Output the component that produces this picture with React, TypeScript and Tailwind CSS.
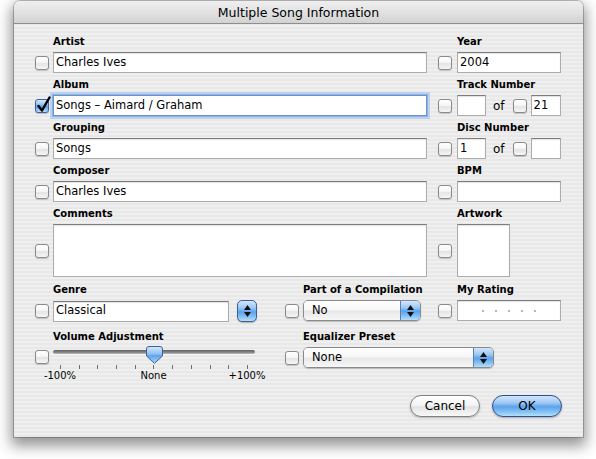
import React from 'react';

const BLUE =
  "bg-[linear-gradient(to_bottom,#d2e6fb_0%,#9cc8f4_35%,#6aa9ec_50%,#5ea4ec_55%,#86c3f5_80%,#b4e0fc_100%)]";

function Check({ checked = false, cls = '' }: { checked?: boolean; cls?: string }) {
  if (checked) {
    return (
      <div
        className={`relative w-[14px] h-[14px] shrink-0 rounded-[3px] border border-[#3d5f9c] ${BLUE} shadow-[0_1px_1px_rgba(0,0,0,0.2)] ${cls}`}
      >
        <svg className="absolute left-[0px] top-[-4px]" width="16" height="17" viewBox="0 0 16 17">
          <path
            d="M2.5 10 L6 14.5 L13.5 1.5"
            fill="none"
            stroke="#000"
            strokeWidth="2.4"
            strokeLinecap="round"
            strokeLinejoin="round"
          />
        </svg>
      </div>
    );
  }
  return (
    <div
      className={`w-[14px] h-[14px] shrink-0 rounded-[3px] border border-[#8a8a8a] bg-[linear-gradient(to_bottom,#ffffff_0%,#f6f6f6_45%,#e4e4e4_55%,#f6f6f6_100%)] shadow-[0_1px_1px_rgba(0,0,0,0.18)] ${cls}`}
    />
  );
}

function Field({
  children,
  cls,
  focused = false,
}: {
  children?: React.ReactNode;
  cls: string;
  focused?: boolean;
}) {
  const border = focused
    ? 'border border-[#6b92cc] shadow-[0_0_0_1px_#8fb2e3,0_0_0_3px_#bcd2f1]'
    : 'border border-[#acacac] border-t-[#7e7e7e] shadow-[inset_0_1px_1px_rgba(0,0,0,0.12)]';
  return (
    <div className={`bg-white ${border} flex items-center pl-[2px] text-[11.5px] text-black shrink-0 ${cls}`}>
      {children}
    </div>
  );
}

function Arrows() {
  return (
    <div className="flex flex-col items-center gap-[2px]">
      <svg width="7" height="5" viewBox="0 0 7 5">
        <path d="M3.5 0 L7 5 L0 5 Z" fill="#111" />
      </svg>
      <svg width="7" height="5" viewBox="0 0 7 5">
        <path d="M0 0 L7 0 L3.5 5 Z" fill="#111" />
      </svg>
    </div>
  );
}

function Popup({ text, cls }: { text: string; cls: string }) {
  return (
    <div
      className={`h-[21px] flex rounded-[5px] border border-[#8a8a8a] overflow-hidden shadow-[0_1px_1px_rgba(0,0,0,0.2)] shrink-0 ${cls}`}
    >
      <div className="flex-1 flex items-center pl-[8px] text-[11.5px] text-black bg-[linear-gradient(to_bottom,#ffffff_0%,#f7f7f7_45%,#e8e8e8_55%,#f7f7f7_100%)]">
        {text}
      </div>
      <div className={`w-[20px] border-l border-[#5c7fb8] flex items-center justify-center ${BLUE}`}>
        <Arrows />
      </div>
    </div>
  );
}

function Label({ children, cls = 'pl-[18px]' }: { children: React.ReactNode; cls?: string }) {
  return (
    <div className={`h-[14px] leading-[14px] text-[10px] font-bold text-black mb-[3px] whitespace-nowrap ${cls}`}>
      {children}
    </div>
  );
}

function Slider() {
  const ticks = Array.from({ length: 11 });
  return (
    <div className="relative w-[202px] h-[36px] shrink-0">
      <div className="absolute left-0 right-0 top-[3px] h-[4px] rounded-full bg-[linear-gradient(to_bottom,#5e5e5e,#8a8a8a_60%,#b9b9b9)] shadow-[0_1px_0_rgba(255,255,255,0.6)]" />
      <svg className="absolute left-[93px] top-[-1px]" width="17" height="18" viewBox="0 0 17 18">
        <defs>
          <linearGradient id="thumb" x1="0" y1="0" x2="0" y2="1">
            <stop offset="0" stopColor="#d6e9fc" />
            <stop offset="0.45" stopColor="#8fc0f3" />
            <stop offset="0.55" stopColor="#5fa3ec" />
            <stop offset="1" stopColor="#a8dbfb" />
          </linearGradient>
        </defs>
        <path
          d="M3 0.5 H14 Q16.5 0.5 16.5 3 V10 L8.5 17.3 L0.5 10 V3 Q0.5 0.5 3 0.5 Z"
          fill="url(#thumb)"
          stroke="#3f5f98"
          strokeWidth="1"
        />
      </svg>
      <div className="absolute left-[7px] right-[7px] top-[18px] flex justify-between">
        {ticks.map((_, i) => (
          <div key={i} className="w-[1px] h-[4px] bg-[#6f6f6f]" />
        ))}
      </div>
      <div className="absolute left-[-13px] right-[-12px] top-[23px] flex justify-between text-[10px] leading-[12px] text-black">
        <span className="w-[40px] text-center">-100%</span>
        <span className="w-[40px] text-center">None</span>
        <span className="w-[40px] text-center">+100%</span>
      </div>
    </div>
  );
}

export default function App() {
  return (
    <div className="w-[596px] h-[459px] bg-white pl-[14px] pt-[1px] font-['DejaVu_Sans',sans-serif]">
      <div className="w-[569px] h-[436px] flex flex-col rounded-t-[6px] overflow-hidden bg-[repeating-linear-gradient(to_bottom,#efefef_0px,#efefef_2px,#e8e8e8_2px,#e8e8e8_4px)] shadow-[0_0_0_1px_rgba(0,0,0,0.22),0_6px_14px_3px_rgba(0,0,0,0.42)]">
        {/* Title bar */}
        <div className="h-[23px] shrink-0 flex items-center justify-center pt-[2px] border-b border-[#8e8e8e] bg-[linear-gradient(to_bottom,#efefef_0%,#e2e2e2_50%,#d2d2d2_100%)] text-[12.5px] text-black">
          Multiple Song Information
        </div>

        {/* Content */}
        <div className="flex-1 flex flex-col pl-[21px] pr-[21px] pt-[11px] pb-[20px]">
          {/* Row 1 */}
          <div className="flex mb-[5px]">
            <div className="w-[392px] flex flex-col">
              <Label>Artist</Label>
              <div className="flex items-center gap-[4px]">
                <Check />
                <Field cls="w-[374px] h-[21px]">Charles Ives</Field>
              </div>
            </div>
            <div className="ml-[11px] w-[123px] flex flex-col">
              <Label cls="pl-[19px]">Year</Label>
              <div className="flex items-center gap-[5px]">
                <Check />
                <Field cls="w-[104px] h-[21px]">2004</Field>
              </div>
            </div>
          </div>

          {/* Row 2 */}
          <div className="flex mb-[5px]">
            <div className="w-[392px] flex flex-col">
              <Label>Album</Label>
              <div className="flex items-center gap-[4px]">
                <Check checked />
                <Field cls="w-[374px] h-[21px]" focused>
                  Songs – Aimard / Graham
                </Field>
              </div>
            </div>
            <div className="ml-[11px] w-[123px] flex flex-col">
              <Label cls="pl-[19px]">Track Number</Label>
              <div className="flex items-center">
                <Check />
                <Field cls="ml-[5px] w-[29px] h-[21px]" />
                <span className="ml-[7px] text-[12px] text-black">of</span>
                <Check cls="ml-[8px]" />
                <Field cls="ml-[4px] w-[30px] h-[21px]">21</Field>
              </div>
            </div>
          </div>

          {/* Row 3 */}
          <div className="flex mb-[5px]">
            <div className="w-[392px] flex flex-col">
              <Label>Grouping</Label>
              <div className="flex items-center gap-[4px]">
                <Check />
                <Field cls="w-[374px] h-[21px]">Songs</Field>
              </div>
            </div>
            <div className="ml-[11px] w-[123px] flex flex-col">
              <Label cls="pl-[19px]">Disc Number</Label>
              <div className="flex items-center">
                <Check />
                <Field cls="ml-[5px] w-[29px] h-[21px]">1</Field>
                <span className="ml-[7px] text-[12px] text-black">of</span>
                <Check cls="ml-[8px]" />
                <Field cls="ml-[4px] w-[30px] h-[21px]" />
              </div>
            </div>
          </div>

          {/* Row 4 */}
          <div className="flex mb-[5px]">
            <div className="w-[392px] flex flex-col">
              <Label>Composer</Label>
              <div className="flex items-center gap-[4px]">
                <Check />
                <Field cls="w-[374px] h-[21px]">Charles Ives</Field>
              </div>
            </div>
            <div className="ml-[11px] w-[123px] flex flex-col">
              <Label cls="pl-[19px]">BPM</Label>
              <div className="flex items-center gap-[5px]">
                <Check />
                <Field cls="w-[104px] h-[21px]" />
              </div>
            </div>
          </div>

          {/* Row 5 */}
          <div className="flex mb-[6px]">
            <div className="w-[392px] flex flex-col">
              <Label>Comments</Label>
              <div className="flex items-center gap-[4px]">
                <Check />
                <Field cls="w-[374px] h-[53px]" />
              </div>
            </div>
            <div className="ml-[11px] w-[123px] flex flex-col">
              <Label cls="pl-[19px]">Artwork</Label>
              <div className="flex items-center gap-[5px]">
                <Check />
                <Field cls="w-[53px] h-[53px]" />
              </div>
            </div>
          </div>

          {/* Row 6 */}
          <div className="flex mb-[8px]">
            <div className="w-[250px] flex flex-col">
              <Label>Genre</Label>
              <div className="flex items-center">
                <Check />
                <Field cls="ml-[4px] w-[176px] h-[21px]">Classical</Field>
                <div
                  className={`ml-[8px] w-[20px] h-[22px] rounded-[5px] border border-[#3f5f98] flex items-center justify-center shadow-[0_1px_1px_rgba(0,0,0,0.25)] ${BLUE}`}
                >
                  <Arrows />
                </div>
              </div>
            </div>
            <div className="w-[153px] flex flex-col">
              <Label>Part of a Compilation</Label>
              <div className="flex items-center">
                <Check />
                <Popup text="No" cls="ml-[4px] w-[118px]" />
              </div>
            </div>
            <div className="w-[123px] flex flex-col">
              <Label cls="pl-[19px]">My Rating</Label>
              <div className="flex items-center gap-[5px]">
                <Check />
                <Field cls="w-[104px] h-[21px] pl-[24px] gap-[11px]">
                  <span className="w-[2px] h-[2px] bg-[#b5b5b5]" />
                  <span className="w-[2px] h-[2px] bg-[#b5b5b5]" />
                  <span className="w-[2px] h-[2px] bg-[#b5b5b5]" />
                  <span className="w-[2px] h-[2px] bg-[#b5b5b5]" />
                  <span className="w-[2px] h-[2px] bg-[#b5b5b5]" />
                </Field>
              </div>
            </div>
          </div>

          {/* Row 7 */}
          <div className="flex">
            <div className="w-[250px] flex flex-col">
              <Label>Volume Adjustment</Label>
              <div className="flex items-start">
                <Check cls="mt-[3px]" />
                <div className="ml-[4px]">
                  <Slider />
                </div>
              </div>
            </div>
            <div className="w-[210px] flex flex-col">
              <Label>Equalizer Preset</Label>
              <div className="flex items-center">
                <Check />
                <Popup text="None" cls="ml-[4px] w-[191px]" />
              </div>
            </div>
          </div>

          {/* Buttons */}
          <div className="mt-auto flex justify-end gap-[12px]">
            <div className="w-[70px] h-[22px] rounded-full border border-[#7f7f7f] flex items-center justify-center text-[12px] text-black bg-[linear-gradient(to_bottom,#ffffff_0%,#f5f5f5_45%,#e3e3e3_55%,#f9f9f9_100%)] shadow-[0_1px_2px_rgba(0,0,0,0.25)]">
              Cancel
            </div>
            <div
              className={`w-[70px] h-[22px] rounded-full border border-[#2f4f8f] flex items-center justify-center text-[12px] text-black ${BLUE} shadow-[0_1px_2px_rgba(0,0,0,0.3)]`}
            >
              OK
            </div>
          </div>
        </div>
      </div>
    </div>
  );
}
